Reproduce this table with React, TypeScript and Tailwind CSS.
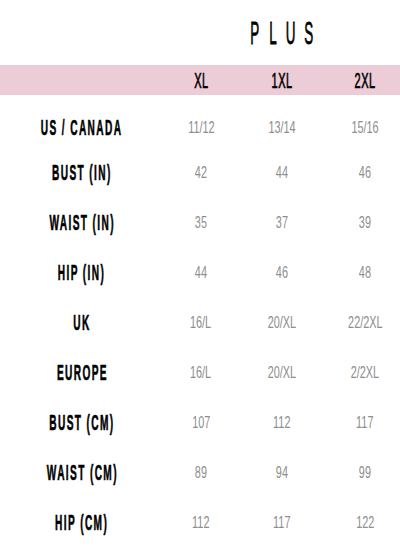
import React from "react";

const rows: [string, string, string, string][] = [
  ["US / CANADA", "11/12", "13/14", "15/16"],
  ["BUST (IN)", "42", "44", "46"],
  ["WAIST (IN)", "35", "37", "39"],
  ["HIP (IN)", "44", "46", "48"],
  ["UK", "16/L", "20/XL", "22/2XL"],
  ["EUROPE", "16/L", "20/XL", "2/2XL"],
  ["BUST (CM)", "107", "112", "117"],
  ["WAIST (CM)", "89", "94", "99"],
  ["HIP (CM)", "112", "117", "122"],
];

const font = { fontFamily: '"Liberation Sans", Arial, sans-serif' };

function Label({ text }: { text: string }) {
  return (
    <div className="flex items-center justify-center">
      <span className="inline-block whitespace-nowrap text-[22px] leading-none font-bold text-black scale-x-[0.46] tracking-[3px] [-webkit-text-stroke:0.6px_black]">
        {text}
      </span>
    </div>
  );
}

function Value({ text, extra = "" }: { text: string; extra?: string }) {
  return (
    <div className={"flex items-center justify-center " + extra}>
      <span className="inline-block whitespace-nowrap text-[16px] leading-none text-[#8e8e8e] scale-x-[0.68]">
        {text}
      </span>
    </div>
  );
}

export default function App() {
  return (
    <div className="w-[400px] h-[549px] bg-white overflow-hidden" style={font}>
      <div className="h-[65px] grid grid-cols-[164px_74px_88px_74px]">
        <div />
        <div />
        <div className="flex items-center justify-center pt-[1px]">
          <div className="flex gap-[8px]">
            {["P", "L", "U", "S"].map((l) => (
              <div key={l} className="w-[10px] flex justify-center">
                <span className="inline-block text-[32px] leading-none text-black scale-x-[0.42] [-webkit-text-stroke:0.8px_black]">
                  {l}
                </span>
              </div>
            ))}
          </div>
        </div>
        <div />
      </div>
      <div className="h-[30px] bg-[#ecccd6] grid grid-cols-[164px_74px_88px_74px]">
        <div />
        {["XL", "1XL", "2XL"].map((h, i) => (
          <div
            key={h}
            className={"flex items-center justify-center pt-[1px] " + (i === 2 ? "pl-[4px]" : "")}
          >
            <span className="inline-block whitespace-nowrap text-[22px] leading-none text-black scale-x-[0.5] tracking-[1px] [-webkit-text-stroke:0.7px_black]">
              {h}
            </span>
          </div>
        ))}
      </div>
      <div className="pt-[13px]">
        {rows.map((r, idx) => (
          <div
            key={r[0]}
            className={
              "grid grid-cols-[164px_74px_88px_74px] " + (idx === 0 ? "h-[40px]" : "h-[50px]")
            }
          >
            <Label text={r[0]} />
            <Value text={r[1]} />
            <Value text={r[2]} />
            <Value text={r[3]} extra="pl-[4px]" />
          </div>
        ))}
      </div>
    </div>
  );
}
